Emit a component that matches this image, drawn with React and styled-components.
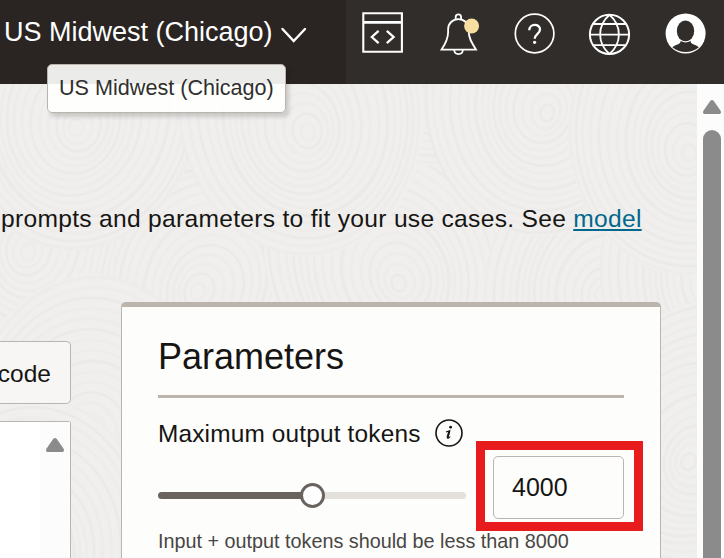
import React from "react";
import styled, { createGlobalStyle } from "styled-components";

const GlobalStyle = createGlobalStyle`
  *, *::before, *::after { box-sizing: border-box; }
  body {
    margin: 0;
    overflow: hidden;
    font-family: "Liberation Sans", Arial, sans-serif;
    color: #161513;
  }
`;

const Page = styled.div`
  display: flex;
  flex-direction: column;
  width: 724px;
  height: 558px;
  overflow: hidden;
`;

const Header = styled.header`
  display: flex;
  flex: 0 0 84px;
  background: #312d2a;
`;

const Region = styled.div`
  position: relative;
  display: flex;
  width: 346px;
  padding: 15px 0 0 4px;
  background: #2a2522;
  color: #fff;
  font-size: 27px;
  line-height: 34px;
  white-space: nowrap;
`;

const RegionName = styled.span`
  width: 269px;
`;

const Chevron = styled.svg`
  margin: 11px 0 0 7px;
`;

const Tooltip = styled.div`
  position: absolute;
  z-index: 2;
  left: 47px;
  top: 64px;
  width: 239px;
  height: 49px;
  padding: 0 0 2px 11px;
  border: 1px solid #bbb4ad;
  border-radius: 5px;
  background: rgba(255, 255, 254, 0.91);
  box-shadow: 3px 4px 4px rgba(0, 0, 0, 0.16);
  color: #302f2e;
  font-size: 21.6px;
  line-height: 45px;
`;

const Actions = styled.nav`
  display: flex;
  align-items: flex-start;
  padding: 10px 0 0 14px;
  gap: 29px;
`;

const ActionIcon = styled.svg`
  flex: none;
  width: 47px;
  height: 48px;
  fill: none;
  stroke: #fff;
  stroke-width: 1.8;
`;

const Body = styled.div`
  display: flex;
  flex: 1;
  min-height: 0;
`;

const Content = styled.main`
  position: relative;
  isolation: isolate;
  width: 697px;
  overflow: hidden;
  background: #f0efed;
`;

const Texture = styled.svg`
  position: absolute;
  z-index: -1;
  inset: 0;
`;

const Intro = styled.p`
  margin: 118px 0 0 1px;
  height: 100px;
  font-size: 24.6px;
  letter-spacing: 0.29px;
  line-height: 34px;
  white-space: nowrap;
`;

const Link = styled.a`
  color: #00688c;
  text-decoration: underline;
  text-decoration-thickness: 2px;
  text-underline-offset: 2px;
`;

const Columns = styled.div`
  display: flex;
  gap: 50px;
  height: 256px;
`;

const Left = styled.div`
  display: flex;
  flex-direction: column;
  gap: 17px;
  width: 71px;
  padding-top: 39px;
`;

const CodeButton = styled.button`
  height: 63px;
  margin: 0;
  padding: 2px 19px 0 0;
  border: 1px solid #bab5af;
  border-left: 0;
  border-radius: 0 5px 5px 0;
  background: #f7f6f4;
  color: #161513;
  font: 24.5px "Liberation Sans", Arial, sans-serif;
  display: flex;
  justify-content: flex-end;
  align-items: center;
`;

const TextArea = styled.div`
  display: flex;
  justify-content: flex-end;
  flex: 1;
  border: solid #bab5af;
  border-width: 1px 1px 0 0;
  border-radius: 0 3px 0 0;
  background: #fff;
`;

const Lane = styled.div`
  display: flex;
  flex-direction: column;
  align-items: center;
  gap: 16px;
  width: ${(p) => p.$width}px;
  padding-top: 16px;
  padding-left: ${(p) => p.$inset || 0}px;
  background: #fcfcfc;
`;

const Thumb = styled.div`
  flex: 1;
  width: 18px;
  border-radius: 9px 9px 0 0;
  background: #8b8b8b;
`;

const Panel = styled.section`
  width: 540px;
  padding: 30px 36px 0;
  border: solid #bbb5ae;
  border-width: 5px 1px 0;
  border-radius: 5px 5px 0 0;
  background: #fdfdfb;
`;

const Title = styled.h2`
  margin: 0;
  height: 61px;
  border-bottom: 3px solid #bbb5ae;
  font-size: 36px;
  font-weight: 400;
  line-height: 40px;
`;

const Label = styled.div`
  display: flex;
  align-items: center;
  gap: 14px;
  margin-top: 20px;
  height: 30px;
  font-size: 24.4px;
  letter-spacing: 0.17px;
  white-space: nowrap;
`;

const LabelText = styled.span`
  padding-top: 1px;
`;

const Control = styled.div`
  display: flex;
  align-items: center;
  gap: 27px;
  margin-top: 8px;
  height: 63px;
`;

const Slider = styled.div`
  display: flex;
  align-items: center;
  width: 308px;
  height: 25px;
  padding-top: 16px;
`;

const Fill = styled.div`
  width: 144px;
  height: 7px;
  border-radius: 4px 0 0 4px;
  background: #6a625f;
`;

const Knob = styled.div`
  position: relative;
  flex: none;
  width: 25px;
  height: 25px;
  margin: 0 -2px;
  border: 3px solid #6a625f;
  border-radius: 50%;
  background: #fff;
`;

const Rest = styled.div`
  flex: 1;
  height: 7px;
  border-radius: 0 4px 4px 0;
  background: #e4e1dd;
`;

const Field = styled.div`
  position: relative;
  width: 131px;
  height: 63px;
  padding-left: 18px;
  border: 1px solid #bab5b0;
  border-radius: 5px;
  font-size: 25px;
  line-height: 61px;
`;

const Highlight = styled.div`
  position: absolute;
  inset: -16px -20px -13px -18px;
  border: 9px solid #e81c1c;
`;

const Hint = styled.div`
  margin-top: 9px;
  color: #484644;
  font-size: 19.8px;
  line-height: 26px;
  white-space: nowrap;
`;

/* Each swirl: centre x, centre y, tilt in degrees. Later swirls overlap earlier ones. */
const swirls = [
  [150, 330, 30], [420, 330, -20], [650, 330, -35], [0, 280, 25],
  [30, 170, 15], [200, 210, 24], [400, 200, -24], [600, 210, 30], [720, 200, 10],
  [180, -30, 12], [430, -40, -14], [660, -20, 20], [30, 10, 25],
  [75, 45, 8], [305, 50, -8], [545, 30, 10], [690, 70, 0],
  [88, 360, 5], [690, 380, 25], [30, 480, 0],
];
const ringRadii = Array.from({ length: 16 }, (_, i) => 7 + i * 7.5);

function GrainTexture() {
  return (
    <Texture width="697" height="474" aria-hidden="true">
      {swirls.map(([x, y, tilt], n) => (
        <g key={n} transform={`translate(${x} ${y}) rotate(${tilt})`}>
          <ellipse cy="-24" rx="122" ry="146" fill="#f0efed" />
          {ringRadii.map((r, i) => (
            <ellipse
              key={r}
              cx={3 * Math.sin(n + i * 0.6)}
              cy={-r * 0.2}
              rx={r}
              ry={r * 1.2}
              fill="none"
              stroke="#e9e8e6"
              strokeOpacity={(i + n) % 3 === 0 ? 0.75 : 0.45}
              strokeWidth={(i + n) % 4 === 0 ? 3.5 : 2.5}
            />
          ))}
        </g>
      ))}
    </Texture>
  );
}

function UpArrow() {
  return (
    <svg width="18" height="14" viewBox="0 0 18 14">
      <path d="M7.2 1.1Q9-.9 10.8 1.1L17.6 10.7Q18.8 14 16 14H2Q-.8 14 .4 10.7Z" fill="#8b8b8b" />
    </svg>
  );
}

function HeaderActions() {
  return (
    <Actions>
      <ActionIcon viewBox="360 10 47 48">
        <path d="M363.3 13.2h38.6v38.6h-38.6z" strokeWidth="2.1" />
        <path d="M363 22.4h39" strokeWidth="2.6" />
        <path d="m378.6 30.8-6.8 6.2 6.8 6.2M386.8 30.8l6.8 6.2-6.8 6.2" strokeWidth="2.3" />
      </ActionIcon>
      <ActionIcon viewBox="436 10 47 48">
        <path d="M441.6 49.6c4.5-7 6.5-11.3 6.5-17.2v-3c0-6 4.6-10.3 10.3-10.3s10.4 4.3 10.4 10.3v3c0 5.9 2.9 10.2 7.2 17.2z" />
        <path d="M455.7 19.2v-2.3c0-3.5 5.4-3.5 5.4 0v2.3M454.2 50c.5 5.4 8.2 5.4 8.7 0" />
        <circle cx="471.6" cy="26" r="7.5" fill="#f8dea0" stroke="none" />
      </ActionIcon>
      <ActionIcon viewBox="512 10 47 48">
        <circle cx="534.6" cy="33.5" r="19.3" strokeWidth="1.7" />
        <path d="M529.3 30.2c0-7 10.7-6.9 10.7-.7 0 4.4-5.3 4.2-5.3 9.3" strokeWidth="2.3" />
        <circle cx="534.6" cy="42.3" r="1.6" fill="#fff" stroke="none" />
      </ActionIcon>
      <ActionIcon viewBox="588 10 47 48">
        <circle cx="609.5" cy="34.4" r="19.6" strokeWidth="2" />
        <path d="M609.5 14.8c-12.5 11-12.5 28.2 0 39.2M609.5 14.8c12.5 11 12.5 28.2 0 39.2M590 34.6h39M593.2 24h32.6M593.2 45.2h32.6" />
      </ActionIcon>
      <ActionIcon viewBox="664 10 47 48">
        <circle cx="685.6" cy="33.5" r="20" fill="#fff" stroke="none" />
        <path d="M681 40.5h9.2l1 2.5c2.5 2 5.5 2.2 7.7 4.3-7 6.3-19.5 6.3-26.6 0 2.2-2.1 5.3-2.3 7.7-4.3z" fill="#312d2a" stroke="none" />
        <ellipse cx="685.5" cy="31" rx="8.7" ry="10.5" fill="#312d2a" stroke="none" />
        <path d="M681 40.5c3 1.7 6.2 1.7 9.2 0" strokeWidth="1.2" />
      </ActionIcon>
    </Actions>
  );
}

function InfoIcon() {
  return (
    <svg width="28" height="28" viewBox="0 0 28 28">
      <circle cx="14" cy="14" r="13" fill="none" stroke="#161513" strokeWidth="1.6" />
      <circle cx="15.6" cy="8.2" r="1.4" fill="#161513" />
      <path d="M11 12.9l3.8-1.2-2.1 7c-.2 1.2.8.8 2.6-1.2" fill="none" stroke="#161513" strokeWidth="1.1" />
      <path d="m14.3 12.2-1.9 6.6" stroke="#161513" strokeWidth="2" />
    </svg>
  );
}

export default function App() {
  return (
    <Page>
      <GlobalStyle />
      <Header>
        <Region>
          <RegionName>US Midwest (Chicago)</RegionName>
          <Chevron width="28" height="18" viewBox="0 0 28 18">
            <path d="m2.5 3 11.2 12L25 3" fill="none" stroke="#fff" strokeWidth="2.4" strokeLinecap="round" />
          </Chevron>
          <Tooltip role="tooltip">US Midwest (Chicago)</Tooltip>
        </Region>
        <HeaderActions />
      </Header>
      <Body>
        <Content>
          <GrainTexture />
          <Intro>
            prompts and parameters to fit your use cases. See <Link>model</Link>
          </Intro>
          <Columns>
            <Left>
              <CodeButton>code</CodeButton>
              <TextArea>
                <Lane $width={30}>
                  <UpArrow />
                </Lane>
              </TextArea>
            </Left>
            <Panel>
              <Title>Parameters</Title>
              <Label>
                <LabelText>Maximum output tokens</LabelText>
                <InfoIcon />
              </Label>
              <Control>
                <Slider>
                  <Fill />
                  <Knob />
                  <Rest />
                </Slider>
                <Field>
                  4000
                  <Highlight />
                </Field>
              </Control>
              <Hint>Input + output tokens should be less than 8000</Hint>
            </Panel>
          </Columns>
        </Content>
        <Lane $width={27} $inset={3}>
          <UpArrow />
          <Thumb />
        </Lane>
      </Body>
    </Page>
  );
}
